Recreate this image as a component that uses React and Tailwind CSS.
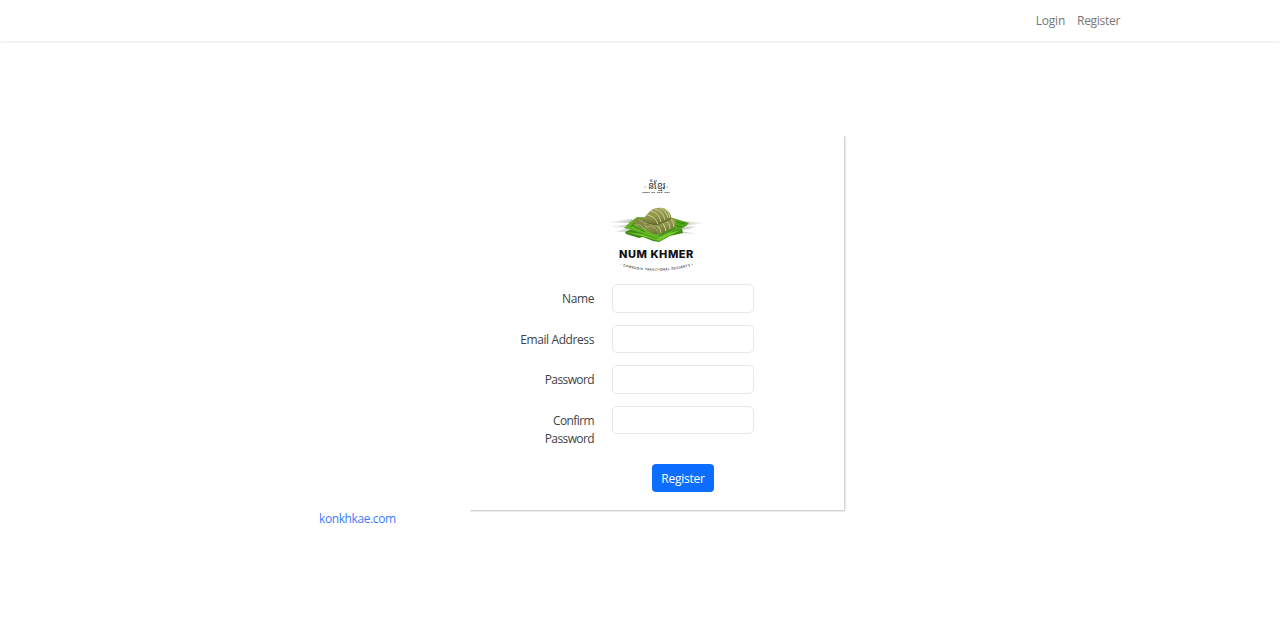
function Logo() {
  return (
    <svg viewBox="0 0 112 104" className="block h-[104px] w-[112px]" role="img" aria-label="Num Khmer">
      <defs>
        <linearGradient id="cake" x1="0" y1="0" x2="0.3" y2="1">
          <stop offset="0" stopColor="#a3a75a" />
          <stop offset="0.6" stopColor="#8f944a" />
          <stop offset="1" stopColor="#6c752f" />
        </linearGradient>
        <linearGradient id="leaf" x1="0" y1="0" x2="1" y2="0">
          <stop offset="0" stopColor="#63b022" />
          <stop offset="0.4" stopColor="#6ab829" />
          <stop offset="1" stopColor="#4b9f18" />
        </linearGradient>
        <linearGradient id="shade" x1="0" y1="0" x2="1" y2="0">
          <stop offset="0" stopColor="#dcdcda" stopOpacity="0.2" />
          <stop offset="0.25" stopColor="#c5c5c1" />
          <stop offset="0.8" stopColor="#cbccc8" />
          <stop offset="1" stopColor="#dcdcda" stopOpacity="0.2" />
        </linearGradient>
        <path id="tagline" d="M19 93 Q56 104.500 94 93" />
      </defs>
      <text x="56.5" y="17" textAnchor="middle" fontSize="9.5" textLength="17" lengthAdjust="spacingAndGlyphs" fill="#333" style={{ fontFamily: '"Noto Sans Khmer", "Khmer OS", "Noto Sans", sans-serif' }}>នំខ្មែរ</text>
      <path d="M44.500 15h1.600M66.500 15h1.600" stroke="#777" strokeWidth="0.8" />
      <path d="M42.500 20.500h7M51.500 20.500h3.600M57 20.500h5.500M64.500 20.500h5" stroke="#666" strokeWidth="0.9" strokeDasharray="1.6 .3" />
      <path d="M9 50 32 47 34 51 8 51ZM13 54 34 52 28 56 12 55ZM15 60 27 56 29 60ZM82 49 104 51 98 52 84 54ZM80 55 97 54 90 57 80 58ZM76 58 97 62 82 61Z" fill="url(#shade)" />
      <path d="M25 60 31 57 66 57 82 57 83 61 70 64 59 70 53 69 43 65 39 66 26 62Z" fill="#3f8d12" />
      <path d="M37 45 73 46 89 51 86 54 81 57 74 59 61 66 55 66 42 61 24 56 30 50Z" fill="url(#leaf)" />
      <path d="m26 60 16 2 14 5 13-6 12-3-10 5-12 6-17-5Z" fill="#76c92e" />
      <path d="m32 53 13 7M37 47l-6 8M59 64l16-8M77 50l8 2M76 54l6 1" fill="none" stroke="#338111" strokeWidth="1" />
      <path d="M34 51q1-5 6-5l11 2 2 12-7-2-10-4Z" fill="#818744" />
      <path d="m35 53 5 0 6 5M39 48q5 1 7 7M43 47l4 5" fill="none" stroke="#b8ba76" strokeWidth="0.8" />
      <path d="M46 55 50 52 70 45Q76 46 76 52L74 56 61 62Q52 63 46 58Z" fill="url(#cake)" />
      <path d="M46 55q9-2 13 7M54 52q6 2 7 9M60 49q5 3 6 10M65 48q5 3 5 9M70 46q4 3 4 9" fill="none" stroke="#cdd092" strokeWidth="1" />
      <path d="M47 55q7-1 12 7" fill="none" stroke="#68713a" strokeWidth="0.8" />
      <path d="M43 48Q46 42 53 37Q62 34 67 38Q72 42 71 47L57 53Q50 53 43 48Z" fill="url(#cake)" />
      <path d="M47 43q8 1 11 9M51 39q8 2 10 11M55 37q8 2 10 11M60 36q6 2 8 10M64 36q6 4 6 10" fill="none" stroke="#cdd092" strokeWidth="1" />
      <path d="M43 48q6 4 14 5l14-6" fill="none" stroke="#57632b" strokeWidth="0.8" />
      <text x="19" y="86" fontSize="11" fontWeight="800" textLength="74" lengthAdjust="spacing" fill="#111" style={{ fontFamily: 'Inter, sans-serif' }}>NUM KHMER</text>
      <text fontSize="3.2" fontWeight="600" fill="#444" textLength="74" style={{ fontFamily: 'Inter, sans-serif' }}><textPath href="#tagline" startOffset="1" textLength="74">- CAMBODIA TRADITIONAL DESSERTS -</textPath></text>
    </svg>
  );
}

const fields = [
  { label: 'Name', type: 'text' },
  { label: 'Email Address', type: 'email' },
  { label: 'Password', type: 'password' },
  { label: 'Confirm Password', type: 'password' },
];

export default function App() {
  return (
    <div className="min-h-[621px] bg-white font-['Open_Sans','Noto_Sans',sans-serif] text-[12px] leading-[18px] tracking-[-0.4px] text-[#404347]">
      <nav className="flex h-[41px] justify-end gap-3 pr-[160px] pt-[12px] tracking-[-0.2px] text-[#777] shadow-[0_1px_3px_rgba(0,0,0,0.1)]">
        <a href="#login">Login</a>
        <a href="#register" className="tracking-[-0.3px]">Register</a>
      </nav>
      <main className="pt-[94px]">
        <form className="ml-[469px] h-[374.5px] w-[375px] pt-[37px] shadow-[1px_1px_2px_rgba(0,0,0,0.25)] [clip-path:inset(1px_-3px_-3px_1px)]" onSubmit={(event) => event.preventDefault()}>
          <div className="ml-[131px] h-[112px]"><Logo /></div>
          <div className="flex flex-col gap-3">
            {fields.map(({ label, type }) => (
              <label key={label} className="flex h-[28.5px]">
                <span className={`ml-[45px] w-[80px] shrink-0 pt-[6px] text-right ${label.includes('Password') ? 'tracking-[-0.6px]' : ''}`}>{label}</span>
                <input type={type} className="ml-[18px] h-[28.5px] w-[141.5px] rounded-[5px] border border-[#e6e8ea] bg-white px-2 outline-none focus:border-blue-400" />
              </label>
            ))}
          </div>
          <button className="ml-[183px] mt-[30px] flex h-[28px] w-[62px] items-center justify-center rounded-[4px] bg-[#0d6efd] pt-px tracking-[-0.25px] text-white">Register</button>
        </form>
        <a href="#home" className="ml-[319px] inline-block text-[#3b7cff]">konkhkae.com</a>
      </main>
    </div>
  );
}
